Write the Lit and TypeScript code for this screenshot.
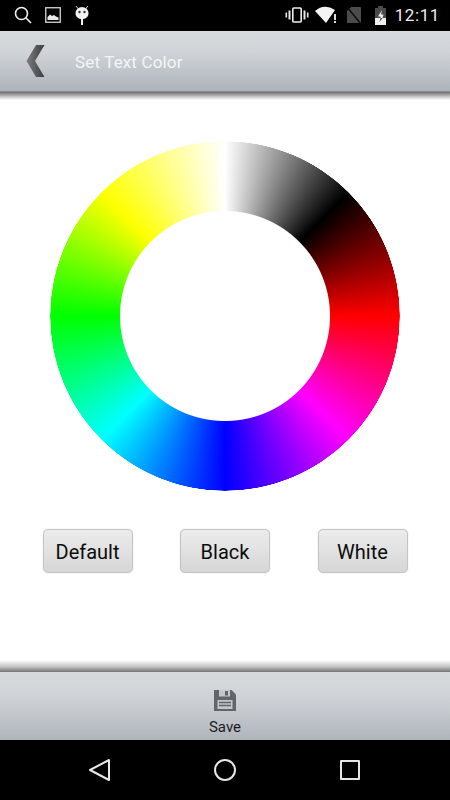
import { LitElement, html, css } from 'lit';
import { customElement } from 'lit/decorators.js';

const presets = ['Default', 'Black', 'White'];

@customElement('app-root')
export class AppRoot extends LitElement {
  static styles = css`
    :host {
      display: flex;
      flex-direction: column;
      width: 450px;
      height: 800px;
      background: #fff;
      font-family: Roboto, 'Liberation Sans', sans-serif;
      overflow: hidden;
    }

    .status {
      flex: 0 0 31px;
      display: flex;
      align-items: center;
      background: #000;
      color: #f2f2f2;
      padding: 0 10px 1px 14px;
      box-sizing: border-box;
    }
    .status svg {
      display: block;
      flex: none;
    }
    .left-icons {
      display: flex;
      align-items: center;
      gap: 13px;
    }
    .right-icons {
      margin-left: auto;
      display: flex;
      align-items: center;
    }
    .wifi {
      margin-left: 6px;
    }
    .sim {
      margin-left: 8px;
    }
    .battery {
      margin-left: 12px;
    }
    .clock {
      font-size: 17px;
      letter-spacing: 0.6px;
      margin-left: 8px;
      color: #eee;
    }

    .header {
      flex: 0 0 61px;
      display: flex;
      align-items: center;
      background: linear-gradient(#d6dadd, #d0d4d8 35%, #aeb3ba);
      border-bottom: 1px solid #8a8c8e;
      box-sizing: border-box;
    }
    .back {
      display: block;
      margin-left: 26px;
    }
    .title {
      margin-left: 30px;
      padding-top: 2px;
      color: #f4f5f6;
      font-size: 17px;
      letter-spacing: 0.15px;
    }
    .shade-down {
      flex: 0 0 8px;
      background: linear-gradient(#6f7071, #c8c8c8 60%, #fff);
    }

    .content {
      flex: 1;
      display: flex;
      flex-direction: column;
      align-items: center;
      padding-top: 41px;
    }
    .wheel {
      width: 350px;
      height: 350px;
      border-radius: 50%;
      background: conic-gradient(#fff 0deg, #000 45deg, #f00 90deg, #f0f 135deg, #00f 180deg, #0ff 225deg, #0f0 270deg, #ff0 315deg, #fff 360deg);
      -webkit-mask: radial-gradient(circle closest-side, transparent 104.5px, #000 105.5px, #000 174.5px, transparent 175px);
      mask: radial-gradient(circle closest-side, transparent 104.5px, #000 105.5px, #000 174.5px, transparent 175px);
    }
    .presets {
      display: flex;
      gap: 47.5px;
      margin-top: 38px;
    }
    .preset {
      width: 90px;
      height: 44px;
      padding: 1px 0 0;
      box-sizing: border-box;
      border: 1px solid #c4c4c4;
      border-radius: 5px;
      background: linear-gradient(#ececec, #d6d6d6);
      box-shadow: 0 0 1px rgba(0, 0, 0, 0.3);
      color: #0c0c0c;
      font: 20px Roboto, 'Liberation Sans', sans-serif;
    }

    .shade-up {
      flex: 0 0 12px;
      background: linear-gradient(#fff, #c4c4c4 55%, #747576);
    }
    .footer {
      flex: 0 0 68px;
      display: flex;
      flex-direction: column;
      align-items: center;
      background: linear-gradient(#d6dadd, #d0d4d8 35%, #b0b5bc);
      box-sizing: border-box;
      padding-top: 17px;
    }
    .footer svg {
      display: block;
    }
    .save-label {
      font-size: 15px;
      line-height: 16px;
      margin-top: 8px;
      color: #1c1c1c;
    }

    .nav {
      flex: 0 0 60px;
      display: flex;
      align-items: center;
      justify-content: center;
      gap: 101px;
      background: #000;
    }
    .nav svg {
      display: block;
    }
  `;

  renderStatusLeft() {
    return html`
      <div class="left-icons">
        <svg width="18" height="18" viewBox="0 0 18 18" fill="none" stroke="#f2f2f2">
          <circle cx="7.5" cy="7.5" r="6" stroke-width="1.6" />
          <path d="M12 12l5 5" stroke-width="1.6" />
        </svg>
        <svg width="16" height="16" viewBox="0 0 16 16">
          <rect x="0.75" y="0.75" width="14.5" height="14.5" fill="none" stroke="#d8d8d8" stroke-width="1.3" />
          <path d="M2.5 13v-3l2.5-2.5 2 1.5 2-1 2 1.5 2.5 1V13z" fill="#e8e8e8" />
        </svg>
        <svg width="16" height="20" viewBox="0 0 16 20" fill="#f0f0f0">
          <path d="M2 1l2.5 3M14 1l-2.5 3" stroke="#c8c8c8" stroke-width="1" />
          <path d="M1.5 8a6.5 6 0 0 1 13 0c0 4-3 6-6.5 6s-6.5-2-6.5-6z" />
          <rect x="7" y="14" width="2" height="6" />
          <circle cx="5.5" cy="7" r="1.2" fill="#333" />
          <circle cx="10.5" cy="7" r="1.2" fill="#333" />
        </svg>
      </div>
    `;
  }

  renderStatusRight() {
    return html`
      <div class="right-icons">
        <svg width="24" height="16" viewBox="0 0 24 16" fill="#e8e8e8">
          <rect x="7.8" y="1" width="8.4" height="14" rx="1" fill="none" stroke="#eee" stroke-width="1.6" />
          <rect x="3.5" y="3.5" width="2" height="9" />
          <rect x="18.5" y="3.5" width="2" height="9" />
          <rect x="0.5" y="5.5" width="1.6" height="5" />
          <rect x="21.9" y="5.5" width="1.6" height="5" />
        </svg>
        <svg class="wifi" width="23" height="18" viewBox="0 0 23 18">
          <path d="M0 5Q9-3 20 4L11 17z" fill="#f4f4f4" />
          <rect x="19" y="8" width="2" height="6" fill="#ddd" />
          <rect x="19" y="15" width="2" height="2" fill="#ddd" />
        </svg>
        <svg class="sim" width="16" height="17" viewBox="0 0 16 17">
          <path d="M5 0h9a1 1 0 0 1 1 1v15H1V4z" fill="#4b4b4b" />
          <path d="M1 0l14 17" stroke="#0c0c0c" stroke-width="1.5" />
        </svg>
        <svg class="battery" width="13" height="19" viewBox="0 0 13 19">
          <path d="M4 0h5v2h3v17H1V2h3z" fill="#4a4a4a" />
          <path d="M1 12h11v7H1z" fill="#f0f0f0" />
          <path d="M8 4L4 10.5h2.500v1.500h2l1-3.500H7z" fill="#f0f0f0" />
          <path d="M6.5 12L5.5 16 8.5 12z" fill="#4a4a4a" />
        </svg>
        <span class="clock">12:11</span>
      </div>
    `;
  }

  render() {
    return html`
      <div class="status">${this.renderStatusLeft()}${this.renderStatusRight()}</div>
      <div class="header">
        <svg class="back" width="19" height="32" viewBox="0 0 19 32">
          <defs>
            <linearGradient id="chev" x1="0" y1="0" x2="1" y2="0">
              <stop offset="0" stop-color="#7c7e80" />
              <stop offset="1" stop-color="#3a3b3d" />
            </linearGradient>
          </defs>
          <path d="M10 0h8.5L9 16l9.5 16H10L0.5 16z" fill="url(#chev)" />
        </svg>
        <span class="title">Set Text Color</span>
      </div>
      <div class="shade-down"></div>
      <div class="content">
        <div class="wheel"></div>
        <div class="presets">
          ${presets.map((p) => html`<button class="preset">${p}</button>`)}
        </div>
      </div>
      <div class="shade-up"></div>
      <div class="footer">
        <svg width="22" height="22" viewBox="0 0 22 22">
          <path d="M0 1h17.5L22 5.5V22H0z" fill="#62666a" />
          <rect x="5" y="1" width="11" height="6.5" fill="#c3c7cb" />
          <rect x="11" y="2" width="3" height="4.5" fill="#62666a" />
          <rect x="3.5" y="11" width="15" height="9" fill="#c3c7cb" />
          <path d="M5 13.5h12M5 16.5h12" stroke="#62666a" stroke-width="1.3" />
        </svg>
        <span class="save-label">Save</span>
      </div>
      <div class="nav">
        <svg width="24" height="24" viewBox="0 0 24 24" fill="none" stroke="#e6e6e6" stroke-width="2" stroke-linejoin="round">
          <path d="M2 12L21 2v20z" />
        </svg>
        <svg width="24" height="24" viewBox="0 0 24 24" fill="none" stroke="#e6e6e6" stroke-width="2">
          <circle cx="12" cy="12" r="10" />
        </svg>
        <svg width="24" height="24" viewBox="0 0 24 24" fill="none" stroke="#e6e6e6" stroke-width="2" stroke-linejoin="round">
          <rect x="3" y="3" width="18" height="18" />
        </svg>
      </div>
    `;
  }
}
